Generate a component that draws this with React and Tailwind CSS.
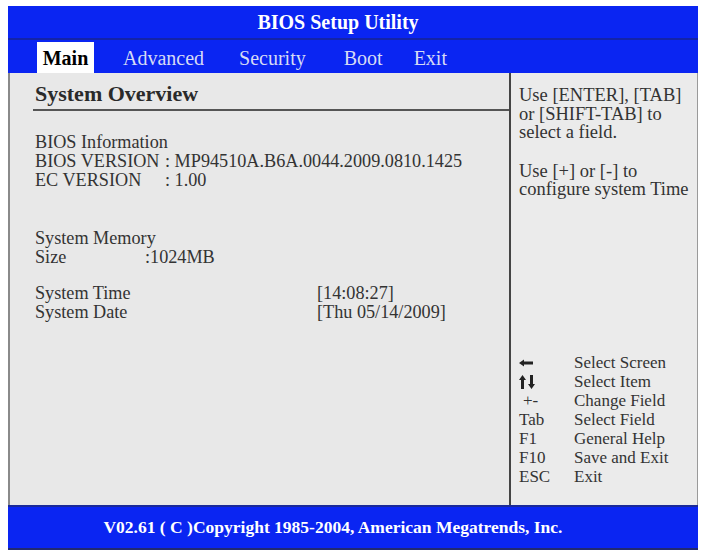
import React from "react";

const serif = { fontFamily: '"Liberation Serif", "Times New Roman", serif' };

function LeftArrow() {
  return (
    <svg width="14" height="8" viewBox="0 0 14 8" className="block">
      <polygon points="0,4 5,0.5 5,2.5 14,2.5 14,5.5 5,5.5 5,7.5" fill="#222" />
    </svg>
  );
}

function UpDown() {
  return (
    <svg width="16" height="14" viewBox="0 0 16 14" className="block">
      <polygon points="3.5,0 7,5 5,5 5,14 2,14 2,5 0,5" fill="#222" />
      <polygon points="12.5,14 16,9 14,9 14,0 11,0 11,9 9,9" fill="#222" />
    </svg>
  );
}

export default function App() {
  const legend = [
    [<LeftArrow key="a" />, "Select Screen"],
    [<UpDown key="b" />, "Select Item"],
    [<span key="c" className="pl-[4px]">+-</span>, "Change Field"],
    ["Tab", "Select Field"],
    ["F1", "General Help"],
    ["F10", "Save and Exit"],
    ["ESC", "Exit"],
  ];
  return (
    <div className="w-[706px] h-[556px] bg-white pl-[8px] pt-[6px]" style={serif}>
      <div className="w-[690px] h-[544px] flex flex-col">
        {/* title */}
        <div className="h-[34px] bg-[#0a25f2] border-b-2 border-[#1424a8] flex items-center justify-center pr-[30px] text-white font-bold text-[20px] leading-none">
          BIOS Setup Utility
        </div>
        {/* tabs */}
        <div className="h-[33px] bg-[#0a25f2] flex items-end pl-[29px] text-[20px] leading-none text-[#d6dbf5]">
          <div className="h-[31px] w-[57px] bg-white text-black font-bold flex items-center justify-center">Main</div>
          <div className="h-[31px] flex items-center ml-[29px]">Advanced</div>
          <div className="h-[31px] flex items-center ml-[35px]">Security</div>
          <div className="h-[31px] flex items-center ml-[38px]">Boot</div>
          <div className="h-[31px] flex items-center ml-[31px]">Exit</div>
        </div>
        {/* content */}
        <div className="flex-1 flex bg-[#e8e8e8] border-l-2 border-[#8a8a8a] border-r border-r-[#9a9a9a]">
          <div className="w-[499px] flex flex-col pl-[25px] pt-[8px] text-[#333] text-[18.2px] leading-[19px] whitespace-nowrap">
            <div className="font-bold text-[22px] leading-[26px] text-[#2a2a2a]">System Overview</div>
            <div className="h-[2px] bg-[#555] mt-[2px] -ml-[2px]"></div>
            <div className="mt-[22px]">BIOS Information</div>
            <div>
              <span className="inline-block w-[130px]">BIOS VERSION</span>: MP94510A.B6A.0044.2009.0810.1425
            </div>
            <div>
              <span className="inline-block w-[130px]">EC VERSION</span>: 1.00
            </div>
            <div className="mt-[39px]">System Memory</div>
            <div>
              <span className="inline-block w-[110px]">Size</span>:1024MB
            </div>
            <div className="mt-[17px] flex">
              <span className="w-[282px]">System Time</span>
              <span>[14:08:27]</span>
            </div>
            <div className="flex">
              <span className="w-[282px]">System Date</span>
              <span>[Thu 05/14/2009]</span>
            </div>
          </div>
          <div className="w-[2px] bg-[#444]"></div>
          <div className="flex-1 flex flex-col pl-[8px] pt-[13px] pb-[19px] text-[#333] bg-[#ebebeb] whitespace-nowrap">
            <div className="text-[18.5px] leading-[18.5px]">
              <div>Use [ENTER], [TAB]</div>
              <div>or [SHIFT-TAB] to</div>
              <div>select a field.</div>
              <div className="mt-[20px]">Use [+] or [-] to</div>
              <div>configure system Time</div>
            </div>
            <div className="mt-auto flex flex-col text-[17px]">
              {legend.map(([k, v], i) => (
                <div key={i} className="flex items-center h-[19px]">
                  <div className="w-[55px] flex items-center">{k}</div>
                  <div>{v}</div>
                </div>
              ))}
            </div>
          </div>
        </div>
        {/* footer */}
        <div className="h-[45px] bg-[#0a25f2] border-t-2 border-[#1a2a9a] border-b-2 border-b-[#222a70] flex items-center justify-center pr-[40px] text-white font-bold text-[17.5px] leading-none">
          V02.61 ( C )Copyright 1985-2004, American Megatrends, Inc.
        </div>
      </div>
    </div>
  );
}
